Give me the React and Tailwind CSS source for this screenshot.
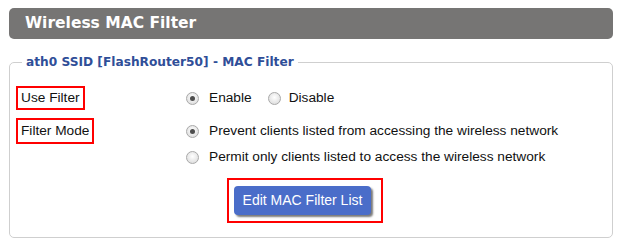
import { useState } from "react";

function Radio({ checked, onClick }) {
  return (
    <span
      onClick={onClick}
      className="flex h-[13px] w-[13px] shrink-0 cursor-pointer items-center justify-center rounded-full border border-[#a9a9a9] bg-[radial-gradient(circle_at_50%_40%,#ffffff,#d6d6d6)]"
    >
      {checked && <span className="h-[5px] w-[5px] rounded-full bg-[#4d4d4d]" />}
    </span>
  );
}

export default function App() {
  const [useFilter, setUseFilter] = useState("enable");
  const [mode, setMode] = useState("prevent");

  return (
    <div className="h-[246px] w-[622px] bg-white px-[9px] pt-2 text-[13.7px] text-[#111] font-['Liberation_Sans',Arial,sans-serif]">
      <div className="flex h-[31px] items-center rounded-[5px] bg-[#767574] pl-4 font-['DejaVu_Sans',Verdana,sans-serif] text-[15.5px] font-bold text-white">
        Wireless MAC Filter
      </div>

      <fieldset className="mt-[14px] w-[604px] rounded-[5px] border border-[#cfcfcf] pb-[14px] pl-[6px] pr-2">
        <legend className="ml-[6px] px-[4px] font-['DejaVu_Sans',Verdana,sans-serif] text-[12.2px] font-bold text-[#2f4e98]">
          ath0 SSID [FlashRouter50] - MAC Filter
        </legend>

        <div className="mt-[15px] grid grid-cols-[170px_1fr]">
          <div className="flex h-[24px]">
            <span className="flex items-center border-2 border-[#ff0000] px-[3px]">Use Filter</span>
          </div>
          <div className="flex h-[24px] items-center">
            <Radio checked={useFilter === "enable"} onClick={() => setUseFilter("enable")} />
            <span className="ml-[10px]">Enable</span>
            <span className="ml-[16px]">
              <Radio checked={useFilter === "disable"} onClick={() => setUseFilter("disable")} />
            </span>
            <span className="ml-[8px]">Disable</span>
          </div>

          <div className="mt-2 flex h-[26px]">
            <span className="flex items-center border-2 border-[#ff0000] px-[3px]">Filter Mode</span>
          </div>
          <div className="mt-2 flex flex-col">
            <div className="flex h-[26px] items-center">
              <Radio checked={mode === "prevent"} onClick={() => setMode("prevent")} />
              <span className="ml-[10px]">Prevent clients listed from accessing the wireless network</span>
            </div>
            <div className="flex h-[26px] items-center">
              <Radio checked={mode === "permit"} onClick={() => setMode("permit")} />
              <span className="ml-[10px]">Permit only clients listed to access the wireless network</span>
            </div>
            <div className="ml-[41px] mt-[8px] flex">
              <div className="border-2 border-[#ff0000] pb-[6px] pl-[5px] pr-[10px] pt-[6px]">
                <button className="flex h-[29px] w-[137px] items-center justify-center rounded-[4px] bg-[#4a6dc9] text-[14px] text-white shadow-[2px_2px_2px_#7a7a7a]">
                  Edit MAC Filter List
                </button>
              </div>
            </div>
          </div>
        </div>
      </fieldset>
    </div>
  );
}
